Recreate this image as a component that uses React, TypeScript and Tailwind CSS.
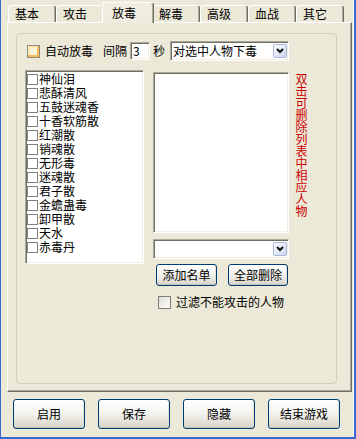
import React from "react";

const SUNKEN =
  "border border-t-[#ACA899] border-l-[#ACA899] border-b-white border-r-white shadow-[inset_1px_1px_0_#716F64,inset_-1px_-1px_0_#F1EFE2] bg-white";

const XPBTN =
  "rounded-[3px] border border-[#003C74] bg-gradient-to-b from-white via-[#F2F2EE] to-[#D8D3C8] shadow-[inset_0_-1px_0_#C9C4B8,inset_-1px_0_0_#E3E0D8] flex items-center justify-center leading-[14px]";

function DropBtn() {
  return (
    <div className="mr-[1px] w-[14px] h-[14px] rounded-[2px] border border-[#A9B8DE] bg-gradient-to-br from-white to-[#C9D4EF] flex items-center justify-center">
      <svg width="8" height="6" viewBox="0 0 8 6">
        <path d="M1 1 L4 4 L7 1" stroke="#111" strokeWidth="2" fill="none" />
      </svg>
    </div>
  );
}

export default function App() {
  const tabs = ["基本", "攻击", "放毒", "解毒", "高级", "血战", "其它"];
  const items = [
    "神仙泪",
    "悲酥清风",
    "五鼓迷魂香",
    "十香软筋散",
    "红潮散",
    "销魂散",
    "无形毒",
    "迷魂散",
    "君子散",
    "金蟾蛊毒",
    "卸甲散",
    "天水",
    "赤毒丹",
  ];

  return (
    <div className="w-[356px] h-[439px] bg-[#ECE9D8] border-l border-r-2 border-b-2 border-[#3A68CF] shadow-[inset_-1px_0_0_#ffffff] flex flex-col text-[12px] text-black font-['Noto_Sans_CJK_SC','Noto_Sans',sans-serif]">
      {/* tabs */}
      <div className="h-[22px] flex items-end pl-[7px] shrink-0">
        {tabs.map((t, i) =>
          i === 2 ? (
            <div
              key={t}
              className="relative z-10 -mx-[2px] -mb-[1px] w-[52px] h-[21px] bg-[#EFEDE0] border-t border-l border-white border-r border-r-[#716F64] rounded-t-[3px] shadow-[inset_-1px_0_0_#ACA899] pl-[9px] pt-[3px] leading-[14px]"
            >
              {t}
            </div>
          ) : (
            <div
              key={t}
              className="w-[48px] h-[17px] border-t border-l border-white border-r border-r-[#716F64] rounded-t-[3px] shadow-[inset_-1px_0_0_#ACA899] pl-[6px] pt-[1px] leading-[14px]"
            >
              {t}
            </div>
          )
        )}
      </div>

      {/* pane */}
      <div className="ml-[6px] w-[345px] h-[370px] shrink-0 border-t border-l border-white border-r border-b border-r-[#716F64] border-b-[#716F64] shadow-[inset_-1px_-1px_0_#ACA899] pl-[8px] pt-[10px]">
        <div className="w-[321px] h-[351px] rounded-[4px] border border-[#D0D0BF] pl-[8px] pt-[7px]">
          {/* row 1 */}
          <div className="flex items-center h-[20px]">
            <div className="ml-[2px] w-[13px] h-[13px] border border-[#8B8A7E] bg-[#FBF1D6] shadow-[inset_-2px_-2px_0_#F5BC5C,inset_2px_2px_0_#FFE9B0]" />
            <span className="ml-[5px] leading-[14px] whitespace-nowrap">自动放毒</span>
            <span className="ml-[10px] leading-[14px] whitespace-nowrap">间隔</span>
            <div className={`ml-[3px] w-[20px] h-[18px] ${SUNKEN} flex items-center pl-[2px] leading-[14px]`}>3</div>
            <span className="ml-[3px] leading-[14px]">秒</span>
            <div className={`ml-[5px] w-[119px] h-[20px] ${SUNKEN} flex items-center`}>
              <span className="flex-1 pl-[2px] leading-[14px] whitespace-nowrap">对选中人物下毒</span>
              <DropBtn />
            </div>
          </div>

          {/* row 2 */}
          <div className="mt-[9px] flex items-start">
            <div className={`w-[119px] h-[194px] ${SUNKEN} pt-[1px] pl-[1px]`}>
              {items.map((it) => (
                <div key={it} className="h-[14px] flex items-center">
                  <div className="w-[11px] h-[11px] border border-[#808080] bg-white shrink-0" />
                  <span className="ml-[1px] leading-[14px] whitespace-nowrap">{it}</span>
                </div>
              ))}
            </div>

            <div className="ml-[9px] flex flex-col">
              <div className="flex items-start">
                <div className={`mt-[2px] w-[136px] h-[161px] ${SUNKEN}`} />
                <div className="ml-[6px] mt-[3px] w-[12px] text-[#CC0000] leading-[12px] [writing-mode:vertical-rl]">
                  双击可删除列表中相应人物
                </div>
              </div>
              <div className={`mt-[6px] w-[136px] h-[20px] ${SUNKEN} flex items-center justify-end`}>
                <DropBtn />
              </div>
              <div className="mt-[5px] flex">
                <div className={`ml-[3px] w-[61px] h-[22px] ${XPBTN}`}>添加名单</div>
                <div className={`ml-[11px] w-[60px] h-[22px] ${XPBTN}`}>全部删除</div>
              </div>
              <div className="mt-[9px] flex items-center h-[14px]">
                <div className="ml-[5px] w-[13px] h-[13px] border border-[#7C7C74] bg-gradient-to-br from-[#DCDCD6] to-white" />
                <span className="ml-[5px] leading-[14px] whitespace-nowrap">过滤不能攻击的人物</span>
              </div>
            </div>
          </div>
        </div>
      </div>

      {/* bottom buttons */}
      <div className="mt-[7px] flex pl-[12px] gap-[13px]">
        {["启用", "保存", "隐藏", "结束游戏"].map((b) => (
          <div key={b} className={`w-[72px] h-[30px] ${XPBTN}`}>
            {b}
          </div>
        ))}
      </div>
    </div>
  );
}
